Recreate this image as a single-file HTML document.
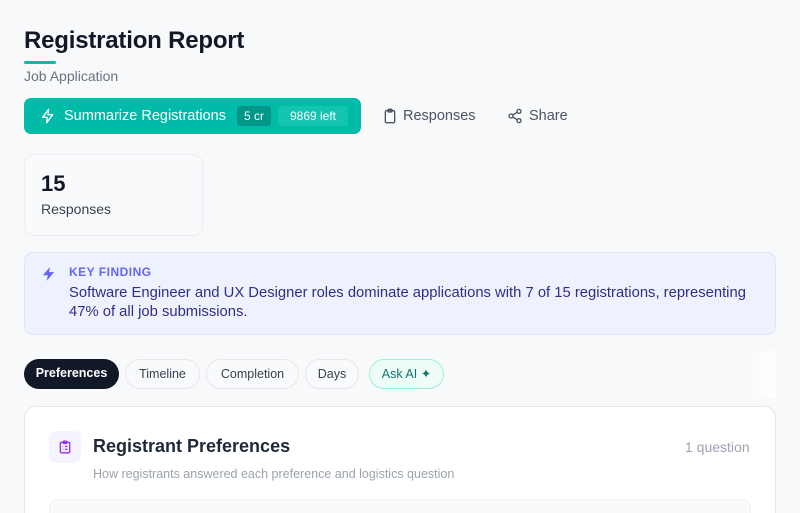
<!DOCTYPE html>
<html><head><meta charset="utf-8"><style>
*{margin:0;padding:0;box-sizing:border-box}
html,body{width:800px;height:513px;overflow:hidden}
body{background:#f8f9fb;font-family:"Liberation Sans",sans-serif;color:#111827;position:relative}
.a{position:absolute;white-space:nowrap}
</style></head><body>
<div class="a" style="left:24px;top:27px;font-size:24px;font-weight:bold;letter-spacing:-0.2px;color:#111827">Registration Report</div>
<div class="a" style="left:24px;top:61px;width:32px;height:3px;border-radius:2px;background:#14b8a6"></div>
<div class="a" style="left:24px;top:68px;font-size:14px;color:#6b7280">Job Application</div>

<div class="a" style="left:24px;top:98px;width:337px;height:36px;border-radius:7px;background:#00bba7;color:#fff">
  <svg class="a" style="left:16px;top:10px" width="16" height="16" viewBox="0 0 24 24" fill="none" stroke="#fff" stroke-width="2" stroke-linejoin="round"><path d="M13 2L4 14h7l-1 8 9-12h-7z"/></svg>
  <div class="a" style="left:40px;top:10px;font-size:14.5px">Summarize Registrations</div>
  <div class="a" style="left:213px;top:8px;height:20px;width:34px;border-radius:3px;background:#009688;font-size:12px;text-align:center;line-height:20px">5 cr</div>
  <div class="a" style="left:254px;top:8px;height:20px;width:70px;border-radius:3px;background:#13c4b0;font-size:12px;text-align:center;line-height:20px">9869 left</div>
</div>
<svg class="a" style="left:382px;top:108px" width="16" height="16" viewBox="0 0 24 24" fill="none" stroke="#4b5563" stroke-width="2"><rect x="5" y="4" width="14" height="18" rx="2"/><rect x="9" y="2" width="6" height="4" rx="1"/></svg>
<div class="a" style="left:403px;top:108px;font-size:14.5px;color:#4b5563">Responses</div>
<svg class="a" style="left:507px;top:108px" width="16" height="16" viewBox="0 0 24 24" fill="none" stroke="#4b5563" stroke-width="2"><circle cx="18" cy="5" r="3"/><circle cx="6" cy="12" r="3"/><circle cx="18" cy="19" r="3"/><path d="M8.6 13.5l6.8 4M15.4 6.5l-6.8 4"/></svg>
<div class="a" style="left:529px;top:108px;font-size:14.5px;color:#4b5563">Share</div>

<div class="a" style="left:24px;top:154px;width:179px;height:82px;border:1px solid #eceef1;border-radius:10px;background:#f9fafb"></div>
<div class="a" style="left:41px;top:171px;font-size:22px;font-weight:bold">15</div>
<div class="a" style="left:41px;top:201px;font-size:14px;color:#374151">Responses</div>

<div class="a" style="left:24px;top:252px;width:752px;height:83px;border:1px solid #dfe4fb;border-radius:9px;background:#eef2fe"></div>
<svg class="a" style="left:41px;top:266px" width="15" height="16" viewBox="0 0 24 24" fill="#6366f1"><path d="M14 1L3 14h8l-2 9 12-14h-8z"/></svg>
<div class="a" style="left:69px;top:265px;font-size:12px;font-weight:bold;color:#6366f1;letter-spacing:0.5px">KEY FINDING</div>
<div class="a" style="left:69px;top:284px;font-size:14.8px;line-height:19px;color:#312e81;white-space:normal;width:692px">Software Engineer and UX Designer roles dominate applications with 7 of 15 registrations, representing 47% of all job submissions.</div>

<div class="a" style="left:24px;top:359px;width:95px;height:30px;border-radius:15px;background:#111827;color:#fff;font-size:12.5px;font-weight:bold;text-align:center;line-height:29px">Preferences</div>
<div class="a" style="left:125px;top:359px;width:75px;height:30px;border-radius:15px;border:1px solid #e5e7eb;background:#f9fafb;color:#374151;font-size:12.5px;text-align:center;line-height:28px">Timeline</div>
<div class="a" style="left:206px;top:359px;width:93px;height:30px;border-radius:15px;border:1px solid #e5e7eb;background:#f9fafb;color:#374151;font-size:12.5px;text-align:center;line-height:28px">Completion</div>
<div class="a" style="left:305px;top:359px;width:54px;height:30px;border-radius:15px;border:1px solid #e5e7eb;background:#f9fafb;color:#374151;font-size:12.5px;text-align:center;line-height:28px">Days</div>
<div class="a" style="left:369px;top:359px;width:75px;height:30px;border-radius:15px;border:1px solid #99f0dc;background:#effdf9;color:#0f766e;font-size:12.5px;text-align:center;line-height:28px">Ask AI ✦</div>
<div class="a" style="left:746px;top:351px;width:30px;height:47px;background:linear-gradient(90deg,#f8f9fb,#fff)"></div>

<div class="a" style="left:24px;top:406px;width:752px;height:107px;border:1px solid #e5e7eb;border-bottom:none;border-radius:11px 11px 0 0;background:#fff"></div>
<div class="a" style="left:49px;top:431px;width:32px;height:32px;border-radius:7px;background:#f5f3ff"></div>
<svg class="a" style="left:58px;top:439px" width="14" height="16" viewBox="0 0 24 24" fill="none" stroke="#9333ea" stroke-width="2.3"><rect x="4" y="4" width="16" height="18" rx="2"/><rect x="9" y="2" width="6" height="4" rx="1"/><path d="M8 11h1M12 11h4M8 16h1M12 16h4"/></svg>
<div class="a" style="left:93px;top:436px;font-size:18px;font-weight:bold;color:#1f2937">Registrant Preferences</div>
<div class="a" style="left:685px;top:439px;font-size:14px;color:#9ca3af">1 question</div>
<div class="a" style="left:93px;top:467px;font-size:12.5px;color:#9ca3af">How registrants answered each preference and logistics question</div>
<div class="a" style="left:49px;top:499px;width:702px;height:14px;border:1px solid #f0f1f3;border-bottom:none;border-radius:9px 9px 0 0;background:#f9fafb"></div>
</body></html>
